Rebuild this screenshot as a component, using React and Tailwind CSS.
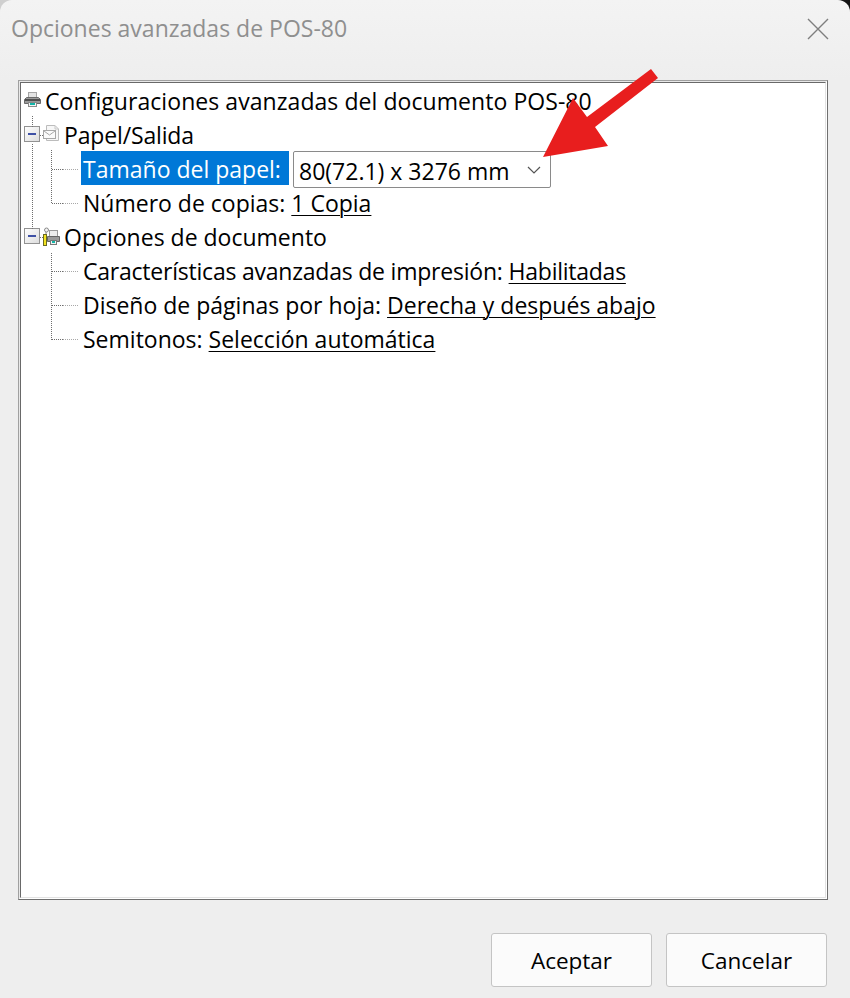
const FONT = "font-['Open_Sans','Noto_Sans',sans-serif]";

function PrinterIcon() {
  return (
    <svg width="18" height="18" viewBox="0 0 18 18" className="shrink-0 self-center">
      <rect x="4.5" y="1.5" width="8" height="5" fill="#e4e4e4" stroke="#a5a5a5" />
      <path d="M0.5 8.5 L2.5 6.5 H14.5 L16.5 8.5 V12.5 H0.5 Z" fill="#9a9a9a" stroke="#6a6a6a" />
      <rect x="1" y="8" width="15" height="2" fill="#4f4f4f" />
      <rect x="4.5" y="11.5" width="8" height="4" fill="#f4f4f4" stroke="#8a8a8a" />
      <rect x="6" y="12" width="5" height="2" fill="#10b5a8" />
    </svg>
  );
}

function Toggle() {
  return (
    <svg width="17" height="17" viewBox="0 0 17 17" className="mt-[1px] shrink-0 self-center">
      <defs>
        <linearGradient id="toggleFill" x1="0" y1="0" x2="1" y2="1">
          <stop offset="0" stopColor="#ffffff" />
          <stop offset="1" stopColor="#dcdcdc" />
        </linearGradient>
      </defs>
      <rect x="0.5" y="0.5" width="15" height="15" fill="url(#toggleFill)" stroke="#929292" />
      <rect x="4" y="7" width="8" height="2" fill="#3f51a5" />
    </svg>
  );
}

function PaperIcon() {
  return (
    <svg width="17" height="18" viewBox="0 0 17 18" className="shrink-0 self-center">
      <path d="M3.5 0.5 H12 L15.5 4 V15.5 H3.5 Z" fill="#f7f7f7" stroke="#bcbcbc" />
      <path d="M12 0.5 V4 H15.5" fill="none" stroke="#c8c8c8" />
      <rect x="0.5" y="5.5" width="12" height="8" fill="#fbfbfb" stroke="#a8a8a8" />
      <path d="M1 6 L6.5 10 L12 6" fill="none" stroke="#a8a8a8" />
    </svg>
  );
}

function DocOptionsIcon() {
  return (
    <svg width="17" height="19" viewBox="0 0 17 19" className="shrink-0 self-center">
      <rect x="6.5" y="3.5" width="8" height="6" fill="#ededed" stroke="#9a9a9a" />
      <path d="M4.5 9.5 H16.5 V14.5 H4.5 Z" fill="#9a9a9a" stroke="#666666" />
      <rect x="7.5" y="13.5" width="6" height="4" fill="#f2f2f2" stroke="#777777" />
      <rect x="9" y="14" width="3" height="2" fill="#10b5a8" />
      <rect x="0.5" y="7.5" width="3" height="11" fill="#f2e21f" stroke="#6b6b20" />
      <circle cx="3.5" cy="3" r="2" fill="#f4f4f4" stroke="#8a8a8a" />
      <path d="M3 5 V7" stroke="#8a8a8a" />
    </svg>
  );
}

function Value({ children, className = "" }) {
  return <span className={`underline underline-offset-[3px] decoration-1 ${className}`}>{children}</span>;
}

function Row({ indent, children }) {
  return <div className={`flex h-[34px] items-start whitespace-nowrap leading-[36px] ${indent}`}>{children}</div>;
}

function Connectors() {
  const dark = { stroke: "#6e6e6e", strokeDasharray: "1 1", fill: "none" };
  const light = { stroke: "#a8a8a8", strokeDasharray: "1 1", fill: "none" };
  return (
    <svg className="absolute left-0 top-0" width="90" height="360" viewBox="0 0 90 360">
      <path d="M32.5 116 V127" {...dark} />
      <path d="M32.5 144 V229" {...dark} />
      <path d="M40 135.5 H44" {...dark} />
      <path d="M40 237.5 H44" {...dark} />
      <path d="M51.5 150 V203" {...dark} />
      <path d="M52 169.5 H63 M52 203.5 H63" {...dark} />
      <path d="M63 169.5 H78 M63 203.5 H78" {...light} />
      <path d="M51.5 253 V340" {...dark} />
      <path d="M52 271.5 H63 M52 305.5 H63 M52 339.5 H63" {...dark} />
      <path d="M63 271.5 H78 M63 305.5 H78 M63 339.5 H78" {...light} />
    </svg>
  );
}

export default function App() {
  return (
    <div className={`relative flex h-[998px] w-[850px] flex-col overflow-hidden bg-[linear-gradient(90deg,#cfcfcf_0%,#cfcfcf_50%,#111111_100%)] ${FONT}`}>
      <div className="flex h-full flex-col rounded-t-[12px] bg-[linear-gradient(180deg,#f3f3f3_0px,#eeeeee_80px)]">
        <div className="flex h-[58px] shrink-0 items-center justify-between pb-[2px] pl-[11px] pr-[21px]">
          <span className="text-[23px] text-[#8f8f8f]">Opciones avanzadas de POS-80</span>
          <svg width="22" height="22" viewBox="0 0 22 22" className="mt-[2px]">
            <path d="M1 1 L21 21 M21 1 L1 21" stroke="#7e7e7e" strokeWidth="1.4" fill="none" />
          </svg>
        </div>

        <div className="ml-[18px] mr-[22px] mt-[22px] h-[820px] shrink-0 border border-t-[#a0a0a0] border-l-[#a0a0a0] border-r-[#6f6f6f] border-b-[#6f6f6f] bg-white">
          <div className="h-full border border-t-[#e8e8e8] border-l-[#e8e8e8] border-r-white border-b-white">
            <div className="relative h-full border border-t-[#696969] border-l-[#696969] border-r-[#e3e3e3] border-b-[#e3e3e3] pl-[3px] text-[23px] text-black">
              <Row indent="gap-[3px]">
                <PrinterIcon />
                <span className="tracking-[0.06px]">Configuraciones avanzadas del documento POS-80</span>
              </Row>
              <Row indent="gap-[2px]">
                <Toggle />
                <PaperIcon />
                <span className="ml-[2px] tracking-[-0.15px]">Papel/Salida</span>
              </Row>
              <Row indent="pl-[57px]">
                <span className="block h-[34px] w-[208px] bg-[#0078d7] pl-[2px] text-white">Tamaño del papel:</span>
                <span className="relative z-10 ml-[4px] flex h-[37px] w-[258px] items-center justify-between rounded-[2px] border border-[#8a8a8a] bg-white pl-[5px] pr-[9px]">
                  <span className="pt-[3px]">80(72.1) x 3276 mm</span>
                  <svg width="14" height="8" viewBox="0 0 14 8">
                    <path d="M1 1 L7 7 L13 1" stroke="#555555" strokeWidth="1.2" fill="none" />
                  </svg>
                </span>
              </Row>
              <Row indent="pl-[59px]">
                <span>Número de copias:&nbsp;<Value>1 Copia</Value></span>
              </Row>
              <Row indent="gap-[2px]">
                <Toggle />
                <DocOptionsIcon />
                <span className="ml-[2px]">Opciones de documento</span>
              </Row>
              <Row indent="pl-[59px]">
                <span><span className="tracking-[-0.22px]">Características avanzadas de impresión:</span>&nbsp;<Value className="tracking-[-0.25px]">Habilitadas</Value></span>
              </Row>
              <Row indent="pl-[59px]">
                <span>Diseño de páginas por hoja:&nbsp;<Value>Derecha y después abajo</Value></span>
              </Row>
              <Row indent="pl-[59px]">
                <span>Semitonos:&nbsp;<Value>Selección automática</Value></span>
              </Row>
              <div className="pointer-events-none absolute -left-[21px] -top-[83px]">
                <Connectors />
              </div>
            </div>
          </div>
        </div>

        <div className="mr-[23px] mt-[33px] flex justify-end gap-[14px] text-[22.5px] text-black">
          <button className="h-[54px] w-[161px] rounded-[3px] border border-[#c4c4c4] bg-[#fbfbfb] pt-[1px]">Aceptar</button>
          <button className="h-[54px] w-[161px] rounded-[3px] border border-[#c4c4c4] bg-[#fbfbfb] pt-[1px]">Cancelar</button>
        </div>
      </div>

      <svg className="pointer-events-none absolute left-0 top-0 z-20" width="850" height="998" viewBox="0 0 850 998">
        <polygon points="651,69 658,78 595,127 608,146 543,157 573,98 587,117" fill="#e81e1e" />
      </svg>
    </div>
  );
}
